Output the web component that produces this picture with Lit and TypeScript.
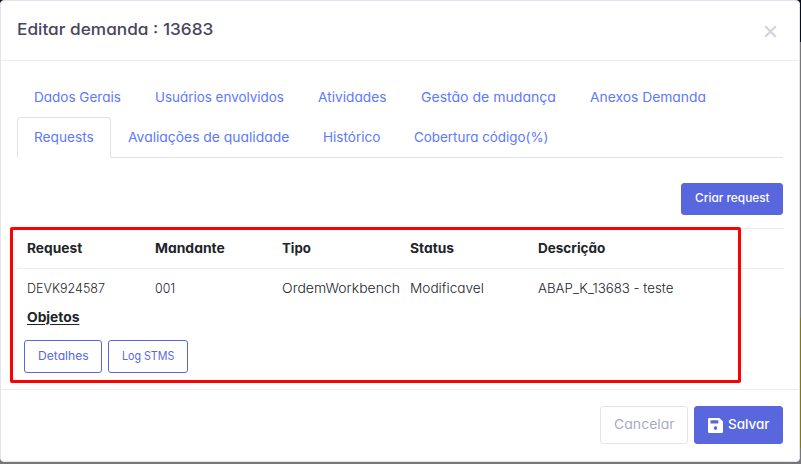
import { LitElement, html, css } from "lit";
import { customElement, property, query } from "lit/decorators.js";

/** Text whose glyphs are stretched horizontally to fill a given advance width. */
@customElement("fit-label")
class FitLabel extends LitElement {
  @property() text = "";
  @property({ type: Number }) width = 0;
  @query("span") span!: HTMLSpanElement;

  static styles = css`
    :host { display: block; white-space: pre; }
    span { display: inline-block; text-decoration: inherit; transform-origin: 0 50%; }
  `;

  render() {
    return html`<span>${this.text}</span>`;
  }

  updated() {
    this.span.style.transform = `scaleX(${(this.width / this.span.offsetWidth).toFixed(4)})`;
    this.style.width = `${this.width}px`;
  }
}

type Label = [text: string, width: number];

const TABS: Label[][] = [
  [["Dados Gerais", 87.3], ["Usuários envolvidos", 129], ["Atividades", 68.5], ["Gestão de mudança", 135], ["Anexos Demanda", 116]],
  [["Requests", 60], ["Avaliações de qualidade", 161], ["Histórico", 57.3], ["Cobertura código(%)", 135]],
];
const HEAD: Label[] = [["Request", 55], ["Mandante", 69.5], ["Tipo", 28.5], ["Status", 43.5], ["Descrição", 67.5]];
const ROW: Label[] = [["DEVK924587", 78], ["001", 20], ["OrdemWorkbench", 118.5], ["Modificavel", 73.5], ["ABAP_K_13683 - teste", 135]];

const label = ([text, width]: Label) => html`<fit-label .text=${text} .width=${width}></fit-label>`;

@customElement("app-root")
class AppRoot extends LitElement {
  static styles = css`
    :host {
      display: block; position: relative; width: 801px; height: 464px; overflow: hidden;
      box-sizing: border-box; padding: 0 1px 2px 0;
      font: 300 13px/20px Inter, "Open Sans", sans-serif;
      font-feature-settings: "cv11", "ss03";
      color: #212529;
      background: linear-gradient(#060d1c 42px, #777779 42px, #777779 318px, #807818 318px, #807818 448px, #777779 448px);
    }
    * { box-sizing: border-box; }
    .modal {
      display: flex; flex-direction: column; height: 462px;
      background: #fff; border: 1px solid #e4e4ee; border-radius: 4px;
    }
    header {
      display: flex; justify-content: space-between; align-items: center;
      height: 60px; padding: 0 22px 3px 16px; border-bottom: 1px solid #ebedf2;
    }
    h5 { margin: 0; font-size: 16.2px; font-weight: 500; color: #48465b; }
    .close { width: 13px; height: 13px; margin-top: 5px; stroke: #d3d4e0; stroke-width: 2.3; }
    main { flex: 1; padding: 16px; }
    .tabs { border-bottom: 1px solid #dee2e6; height: 81px; color: #5d78ff; font-weight: 400; }
    .row { display: flex; height: 40px; }
    .row + .row { height: 41px; }
    .tab { padding: 9px 16px 11px; border: 1px solid transparent; border-radius: 4px 4px 0 0; }
    .active { background: #fff; border-color: #dee2e6 #dee2e6 #fff; }
    .toolbar { display: flex; justify-content: flex-end; padding: 25px 0 13px; }
    .btn {
      display: flex; align-items: center; justify-content: center;
      border: 1px solid #5867dd; border-radius: 3px; background: #fff; color: #5867dd;
      font-weight: 400; font-size: 11.3px;
    }
    .primary { background: #5867dd; color: #fff; font-weight: 500; }
    .create { width: 102px; height: 32px; padding-bottom: 2px; }
    .grid {
      display: grid; grid-template-columns: repeat(6, minmax(0, 1fr)); height: 40px;
      padding: 9px 0 0 10px; margin-right: -10px; border-top: 1px solid #ebedf2;
      border-image: linear-gradient(90deg, #ebedf2 766px, transparent 766px) 1;
    }
    .head { font-weight: 700; }
    .objects { display: flex; padding: 0 10px; font-weight: 700; }
    .objects fit-label { margin-top: -1px; height: 21px; text-decoration: underline; text-underline-offset: 2px; }
    .actions { display: flex; gap: 6px; padding: 12px 0 0 7px; }
    .details { width: 78px; height: 33px; padding-bottom: 1px; }
    .log { width: 80px; height: 33px; padding-bottom: 1px; }
    footer {
      display: flex; justify-content: flex-end; gap: 6px; height: 72px;
      padding: 16px; border-top: 1px solid #ebedf2;
    }
    footer .btn { height: 38px; font-size: 13px; padding-bottom: 2px; }
    .cancel { width: 88px; border-color: #e2e5ec; color: #a9abc5; }
    .save { width: 89px; gap: 5px; }
    .save svg { width: 15px; height: 15px; margin-top: 3px; }
    .highlight {
      position: absolute; left: 10px; top: 227px; width: 731px; height: 156px;
      border: 3px solid #f00; border-radius: 2px;
    }
  `;

  render() {
    return html`
      <div class="modal">
        <header>
          <h5>${label(["Editar demanda : 13683", 196])}</h5>
          <svg class="close" viewBox="0 0 13 13"><path d="M1.2 1.2l10.6 10.6M11.8 1.2L1.2 11.8" /></svg>
        </header>
        <main>
          <nav class="tabs">
            ${TABS.map((row) => html`<div class="row">
              ${row.map((t) => html`<div class="tab ${t[0] === "Requests" ? "active" : ""}">${label(t)}</div>`)}
            </div>`)}
          </nav>
          <div class="toolbar"><div class="btn primary create">${label(["Criar request", 74.5])}</div></div>
          <div class="grid head">${HEAD.map(label)}</div>
          <div class="grid">${ROW.map(label)}</div>
          <div class="objects">${label(["Objetos", 52])}</div>
          <div class="actions">
            <div class="btn details">${label(["Detalhes", 50.5])}</div>
            <div class="btn log">${label(["Log STMS", 52])}</div>
          </div>
        </main>
        <footer>
          <div class="btn cancel">${label(["Cancelar", 60.5])}</div>
          <div class="btn primary save">
            <svg viewBox="0 0 15 15"><path fill="#fff" fill-rule="evenodd" d="M1.2 0H11.5L15 3.5V13.8Q15 15 13.8 15H1.2Q0 15 0 13.8V1.2Q0 0 1.2 0ZM2.5 2.3V5.5H10.3V2.3ZM7.5 8.3A1.8 1.8 0 1 0 7.5 11.9A1.8 1.8 0 1 0 7.5 8.3Z" /></svg>
            ${label(["Salvar", 41.5])}
          </div>
        </footer>
      </div>
      <div class="highlight"></div>
    `;
  }
}
